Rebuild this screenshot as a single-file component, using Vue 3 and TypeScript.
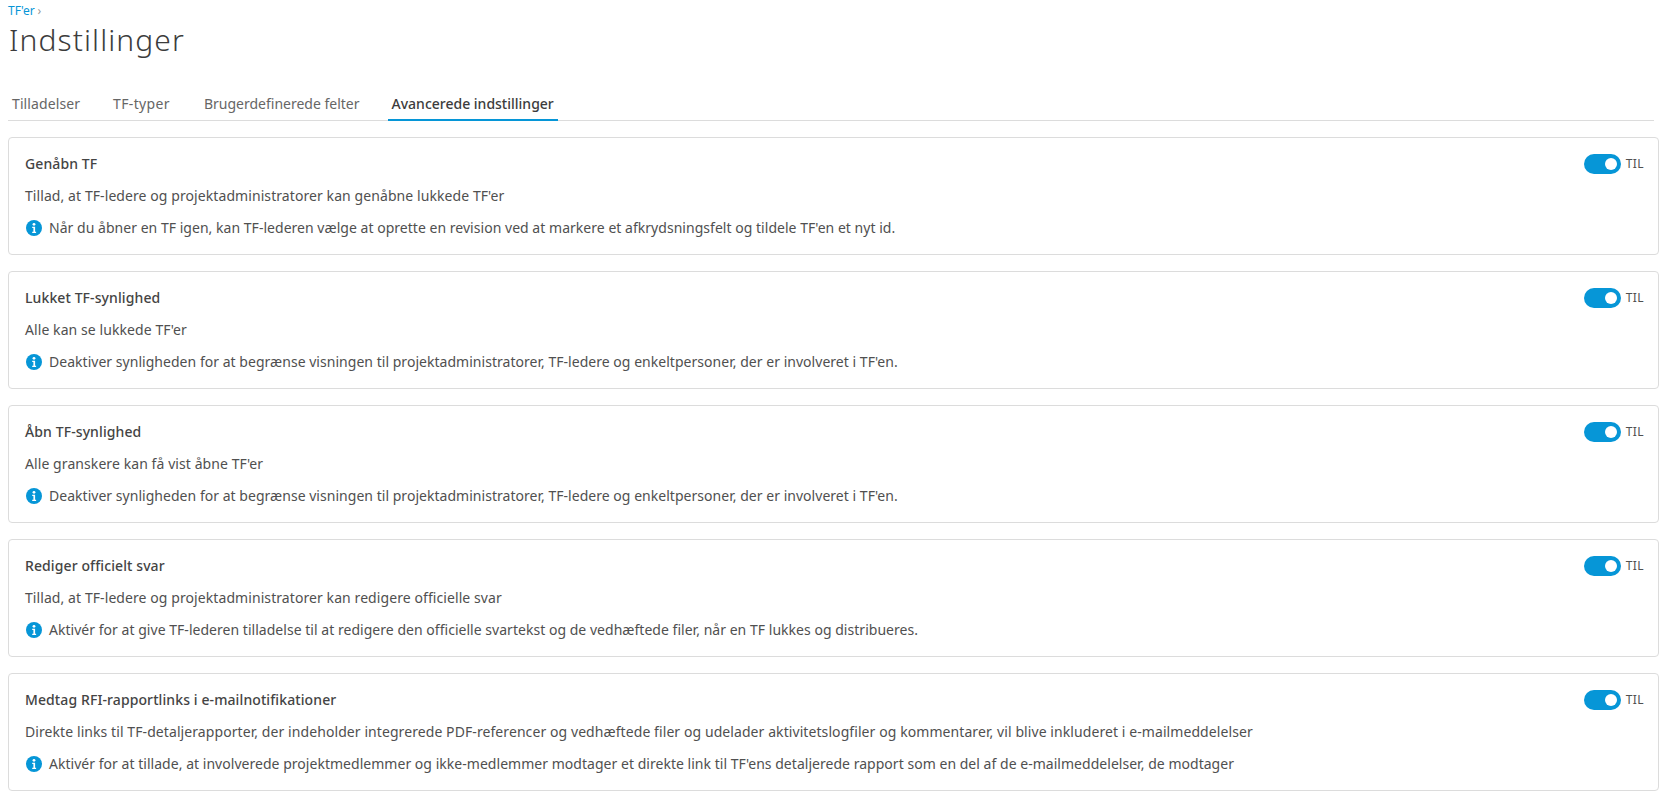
<script setup lang="ts">
interface Setting { title: string; desc: string; info: string }
const tabs: string[] = ['Tilladelser', 'TF-typer', 'Brugerdefinerede felter', 'Avancerede indstillinger']
const settings: Setting[] = [
  { title: 'Genåbn TF', desc: "Tillad, at TF-ledere og projektadministratorer kan genåbne lukkede TF'er", info: "Når du åbner en TF igen, kan TF-lederen vælge at oprette en revision ved at markere et afkrydsningsfelt og tildele TF'en et nyt id." },
  { title: 'Lukket TF-synlighed', desc: "Alle kan se lukkede TF'er", info: "Deaktiver synligheden for at begrænse visningen til projektadministratorer, TF-ledere og enkeltpersoner, der er involveret i TF'en." },
  { title: 'Åbn TF-synlighed', desc: "Alle granskere kan få vist åbne TF'er", info: "Deaktiver synligheden for at begrænse visningen til projektadministratorer, TF-ledere og enkeltpersoner, der er involveret i TF'en." },
  { title: 'Rediger officielt svar', desc: 'Tillad, at TF-ledere og projektadministratorer kan redigere officielle svar', info: 'Aktivér for at give TF-lederen tilladelse til at redigere den officielle svartekst og de vedhæftede filer, når en TF lukkes og distribueres.' },
  { title: 'Medtag RFI-rapportlinks i e-mailnotifikationer', desc: 'Direkte links til TF-detaljerapporter, der indeholder integrerede PDF-referencer og vedhæftede filer og udelader aktivitetslogfiler og kommentarer, vil blive inkluderet i e-mailmeddelelser', info: "Aktivér for at tillade, at involverede projektmedlemmer og ikke-medlemmer modtager et direkte link til TF'ens detaljerede rapport som en del af de e-mailmeddelelser, de modtager" },
]
</script>

<template>
  <div class="page">
    <nav class="crumb"><span class="crumb-link">TF'er</span><span class="crumb-sep">›</span></nav>
    <h1 class="title">Indstillinger</h1>
    <div class="tabs">
      <div v-for="(t, i) in tabs" :key="t" class="tab" :class="{ active: i === 3 }">{{ t }}</div>
    </div>
    <div class="cards">
      <section v-for="s in settings" :key="s.title" class="card">
        <div class="toggle-wrap">
          <span class="toggle"><span class="thumb"></span></span>
          <span class="til">TIL</span>
        </div>
        <div class="card-title">{{ s.title }}</div>
        <div class="desc">{{ s.desc }}</div>
        <div class="info">
          <svg class="info-icon" viewBox="0 0 16 16" width="16" height="16" aria-hidden="true">
            <circle cx="8" cy="8" r="8" fill="#0696d7" />
            <circle cx="8" cy="4.3" r="1.4" fill="#fff" />
            <path d="M6.2 6.7h2.9v5h1v1.2H6.2v-1.2h1.2V7.9H6.2z" fill="#fff" />
          </svg>
          <span>{{ s.info }}</span>
        </div>
      </section>
    </div>
  </div>
</template>

<style>
html, body { margin: 0; background: #fff; }
</style>

<style scoped>
.page {
  height: 798px;
  box-sizing: border-box;
  padding: 0 6px 0 8px;
  overflow: hidden;
  font-family: "Noto Sans", "Open Sans", sans-serif;
  color: #505050;
}
.crumb { height: 22px; display: flex; align-items: center; gap: 3px; font-size: 12px; line-height: 22px; }
.crumb-link { color: #0696d7; }
.crumb-sep { color: #999; }
.title {
  margin: 0;
  height: 35px;
  font-size: 30px;
  line-height: 35px;
  font-weight: 300;
  color: #3c3c3c;
  letter-spacing: 1.1px;
  padding-left: 1px;
}
.tabs {
  margin-top: 31px;
  margin-right: 5px;
  height: 32px;
  display: flex;
  border-bottom: 1px solid #dcdcdc;
}
.tab {
  padding: 0 4px;
  margin-right: 25px;
  font-size: 14px;
  line-height: 32px;
  color: #666;
  letter-spacing: 0.1px;
}
.tab:nth-child(2) { margin-right: 26px; letter-spacing: 0.35px; }
.tab:nth-child(3) { letter-spacing: 0; margin-right: 24px; }
.active { color: #3c3c3c; font-weight: 500; border-bottom: 2px solid #0696d7; height: 31px; letter-spacing: 0; }
.cards { margin-top: 16px; display: flex; flex-direction: column; gap: 16px; }
.card {
  position: relative;
  box-sizing: border-box;
  height: 118px;
  border: 1px solid #dcdcdc;
  border-radius: 4px;
  padding: 16px 15px 0 16px;
}
.toggle-wrap { position: absolute; top: 16px; right: 14px; display: flex; align-items: center; gap: 5px; }
.toggle { width: 37px; height: 20px; border-radius: 10px; background: #0696d7; position: relative; display: block; }
.thumb { position: absolute; right: 4px; top: 4px; width: 12px; height: 12px; border-radius: 50%; background: #fff; }
.til { font-size: 12px; line-height: 20px; color: #505050; letter-spacing: 0.4px; }
.card-title { font-size: 14px; line-height: 20px; font-weight: 500; color: #444; letter-spacing: 0.1px; }
.desc { margin-top: 12px; font-size: 14px; line-height: 20px; letter-spacing: 0.08px; }
.info { margin-top: 12px; display: flex; align-items: center; gap: 7px; font-size: 14px; line-height: 20px; letter-spacing: 0.03px; white-space: nowrap; }
.info-icon { flex: none; margin-left: 1px; }
</style>
